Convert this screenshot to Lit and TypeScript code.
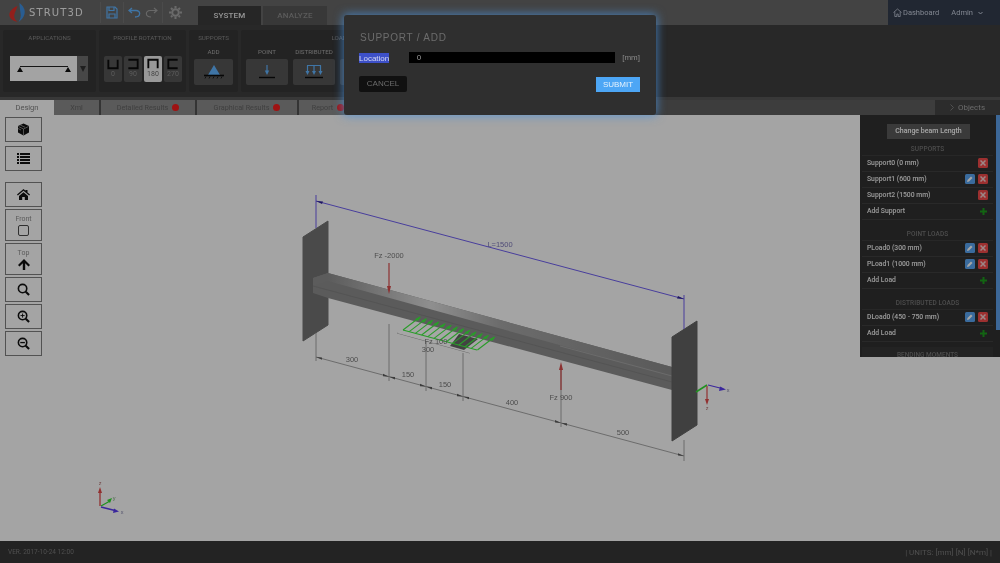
import { LitElement, html, css, svg } from 'lit';
import { customElement } from 'lit/decorators.js';

const objectSections = [
  { title: 'SUPPORTS', add: 'Add Support', rows: [
    { name: 'Support0 (0 mm)', edit: false },
    { name: 'Support1 (600 mm)', edit: true },
    { name: 'Support2 (1500 mm)', edit: false },
  ] },
  { title: 'POINT LOADS', add: 'Add Load', rows: [
    { name: 'PLoad0 (300 mm)', edit: true },
    { name: 'PLoad1 (1000 mm)', edit: true },
  ] },
  { title: 'DISTRIBUTED LOADS', add: 'Add Load', rows: [
    { name: 'DLoad0 (450 - 750 mm)', edit: true },
  ] },
];

const profiles = [
  { label: '0', d: 'M3 2v11h12V2' },
  { label: '90', d: 'M3 2h12v11H3' },
  { label: '180', d: 'M3 13V2h12v11', active: true },
  { label: '270', d: 'M15 2H3v11h12' },
];

const tabs = [
  { label: 'Design', cls: 'design' },
  { label: 'Xml', cls: 'xml' },
  { label: 'Detailed Results', cls: 'detailed', dot: true },
  { label: 'Graphical Results', cls: 'graphical', dot: true },
  { label: 'Report', cls: 'report', dot: true },
];

const dimLabels = [
  ['300', 352, 362], ['150', 408, 377], ['150', 445, 387], ['400', 512, 405], ['500', 623, 435],
  ['300', 428, 352], ['Fz 100', 436, 344], ['Fz -2000', 389, 258], ['Fz 900', 561, 400],
] as const;

const dimVerticals = [
  [316, 333, 361], [389, 324, 381], [426, 338, 391], [463, 353, 401], [561, 365, 427], [684, 440, 461],
];

// arrowheads on the lower dimension line, dir points away from the vertical
const dimTicks = [
  [316, 1], [389, -1], [389, 1], [426, -1], [426, 1], [463, -1], [463, 1], [561, -1], [561, 1], [684, -1],
];

const dimY = (x: number) => 357 + (x - 316) * 0.269;

const loadArrows = Array.from({ length: 13 }, (_, i) => 403 + i * 6.2);

@customElement('app-root')
export class AppRoot extends LitElement {
  static styles = css`
    :host {
      display: grid;
      grid-template-rows: 25px 72px 3px 15px 1fr 22px;
      height: 563px;
      width: 1000px;
      position: relative;
      overflow: hidden;
      font-family: Roboto, "Liberation Sans", sans-serif;
      background: #fcfcfc;
      filter: blur(.35px);
    }
    .topbar {
      display: flex;
      align-items: stretch;
      background: #686868;
    }
    .logo {
      display: flex;
      align-items: center;
      gap: 3px;
      padding-left: 8px;
      width: 92px;
      color: #f0f0f0;
      font-family: "DejaVu Sans", sans-serif;
      font-size: 10px;
      letter-spacing: 1.15px;
      white-space: nowrap;
    }
    .tool {
      display: flex;
      align-items: center;
      justify-content: center;
      border-left: 1px solid #747474;
      height: 21px;
      align-self: center;
      gap: 4px;
    }
    .tool.save { width: 22px; }
    .tool.undo { width: 38px; }
    .tool.gear { width: 24px; margin-right: 11px; }
    .sys-tabs { display: flex; gap: 2px; align-self: flex-end; }
    .sys-tab {
      height: 19px;
      line-height: 19px;
      text-align: center;
      font-size: 8px;
      font-weight: 500;
      letter-spacing: .2px;
      width: 63px;
      background: #3b3b3b;
      color: #e4e4e4;
    }
    .sys-tab.off { background: #565656; color: #8c8c8c; width: 64px; }
    .user {
      margin-left: auto;
      width: 112px;
      background: #343d4e;
      display: flex;
      align-items: center;
      gap: 12px;
      padding-left: 5px;
      box-sizing: border-box;
      color: #c4ccdb;
      font-size: 7.5px;
    }
    .user span { display: flex; align-items: center; gap: 1px; }
    .user .caret { margin-left: 4px; }
    .ribbon {
      background: #3e3e3e;
      display: flex;
      gap: 3px;
      padding: 5px 0 5px 3px;
      box-sizing: border-box;
    }
    .group {
      background: #363636;
      border-radius: 2px;
      color: #8a8a8a;
      font-size: 6.2px;
      text-align: center;
      box-sizing: border-box;
      padding-top: 4px;
      display: flex;
      flex-direction: column;
    }
    .group.apps { width: 93px; }
    .group.rot { width: 87px; }
    .group.sup { width: 49px; }
    .group.loads { width: 200px; }
    .group .title { height: 14px; line-height: 8px; }
    .app-select { display: flex; margin: 8px 0 0 7px; height: 25px; }
    .app-face {
      width: 67px;
      background: #fbfbfb;
      display: flex;
      align-items: center;
      justify-content: center;
    }
    .app-arrow {
      width: 11px;
      background: #6e6e6e;
      display: flex;
      align-items: center;
      justify-content: center;
    }
    .app-arrow i {
      border: 3.5px solid transparent;
      border-top: 6px solid #303030;
      border-bottom: 0;
    }
    .profiles { display: flex; gap: 2px; margin: 8px 0 0 5px; }
    .profile {
      width: 18px;
      height: 26px;
      background: #555555;
      border-radius: 2px;
      color: #8c8c8c;
      font-size: 7px;
      display: flex;
      flex-direction: column;
      align-items: center;
      padding-top: 2px;
      box-sizing: border-box;
    }
    .profile.on { background: #ececec; color: #6a6a6a; }
    .profile svg { display: block; }
    .act-row { display: flex; gap: 5px; padding-left: 5px; }
    .act { width: 42px; text-align: center; }
    .sup .act { width: 39px; }
    .act-label { height: 11px; line-height: 8px; color: #a8a8a8; white-space: nowrap; }
    .act-btn {
      height: 26px;
      background: #555555;
      border-radius: 2px;
      display: flex;
      align-items: center;
      justify-content: center;
    }
    .band { background: #575757; }
    .tabs {
      display: flex;
      background: #5e5e5e;
      font-size: 7.2px;
      color: #626262;
    }
    .tab {
      box-sizing: border-box;
      border-right: 2px solid #505050;
      background: #8a8a8a;
      display: flex;
      align-items: center;
      justify-content: center;
      gap: 4px;
      white-space: nowrap;
    }
    .tab.design { width: 54px; background: #fcfcfc; border-right: 0; color: #808080; font-size: 7.5px; }
    .tab.xml { width: 47px; }
    .tab.detailed { width: 96px; }
    .tab.graphical { width: 102px; }
    .tab.report { width: 60px; }
    .tab i {
      width: 7px;
      height: 7px;
      border-radius: 50%;
      background: #f41c1c;
    }
    .objects-tab {
      margin-left: auto;
      width: 65px;
      background: #444444;
      color: #a4a4a4;
      font-size: 8px;
      display: flex;
      align-items: center;
      justify-content: center;
      gap: 4px;
    }
    .stage { position: relative; overflow: hidden; }
    .scene { position: absolute; inset: 0; width: 1000px; height: 426px; }
    .scene text { font-family: "Liberation Sans", sans-serif; font-size: 7.5px; fill: #787878; text-anchor: middle; }
    .tools {
      position: absolute;
      left: 5px;
      top: 2px;
      display: flex;
      flex-direction: column;
      gap: 2px;
    }
    .tbtn {
      width: 37px;
      height: 25px;
      box-sizing: border-box;
      border: 1px solid #7f7f7f;
      display: flex;
      flex-direction: column;
      align-items: center;
      justify-content: center;
      font-size: 7px;
      color: #8c8c8c;
      gap: 2px;
    }
    .tbtn.tall { height: 32px; }
    .tbtn.g1 { margin-top: 2px; }
    .tbtn.g2 { margin-top: 9px; }
    .panel {
      position: absolute;
      left: 860px;
      top: 0;
      width: 140px;
      height: 242px;
      overflow: hidden;
      display: flex;
      background: #303030;
    }
    .panel-body { width: 136px; box-sizing: border-box; padding: 9px 3px 0 2px; }
    .scroll { width: 4px; height: 215px; background: #5c9fe8; }
    .change {
      display: block;
      margin: 0 auto;
      width: 83px;
      height: 15px;
      line-height: 15px;
      text-align: center;
      background: #5a5a5a;
      color: #ffffff;
      font-size: 7px;
      font-weight: 500;
      position: relative;
      left: 1px;
    }
    .sec-title {
      height: 17px;
      line-height: 20px;
      text-align: center;
      color: #767676;
      font-size: 6.5px;
      font-weight: 500;
      letter-spacing: .1px;
      border-bottom: 1px solid #3c3c3c;
      box-sizing: border-box;
    }
    .sec + .sec { margin-top: 4px; }
    .row {
      height: 16px;
      box-sizing: border-box;
      border-bottom: 1px solid #3f3f3f;
      display: flex;
      align-items: center;
      padding: 0 5px 1px;
      color: #ececec;
      font-size: 6.8px;
      font-weight: 500;
      gap: 3px;
    }
    .row .name { flex: 1; white-space: nowrap; }
    .ic {
      width: 10px;
      height: 10px;
      border-radius: 1.5px;
      display: flex;
      align-items: center;
      justify-content: center;
    }
    .ic.edit { background: #5aa5f2; }
    .ic.del { background: #f04a4a; }
    .plus { width: 10px; display: flex; justify-content: center; }
    .bending {
      margin-top: 5px;
      height: 20px;
      line-height: 17px;
      background: #363636;
      text-align: center;
      color: #767676;
      font-size: 6.5px;
      font-weight: 500;
    }
    .footer {
      background: #363636;
      color: #7a7a7a;
      display: flex;
      align-items: center;
      justify-content: space-between;
      padding: 0 8px;
      font-size: 6.5px;
    }
    .footer .units { font-size: 8px; }
    .dim {
      position: absolute;
      inset: 0;
      background: rgba(0, 0, 0, .35);
    }
    .modal {
      position: absolute;
      left: 344px;
      top: 15px;
      width: 312px;
      height: 100px;
      box-sizing: border-box;
      padding: 17px 16px 0 16px;
      background: #2f2f2f;
      border-radius: 3px;
      box-shadow: 0 0 10px 1px rgba(74, 144, 217, .75);
      font-family: "Liberation Sans", sans-serif;
      color: #9a9a9a;
    }
    .modal h3 {
      margin: 0;
      font-size: 10px;
      line-height: 12px;
      font-weight: 400;
      letter-spacing: .75px;
      color: #6c6c6c;
    }
    .field { display: flex; align-items: center; margin-top: 8px; font-size: 8px; margin-left: -1px; }
    .field label { width: 50px; }
    .field label span { background: #3d50c8; color: #d4d8f4; padding: 0.5px 0; }
    .field .input {
      width: 207px;
      height: 11px;
      line-height: 11px;
      background: #000;
      color: #9a9a9a;
      padding-left: 8px;
      box-sizing: border-box;
    }
    .field .unit { margin-left: 7px; color: #8a8a8a; }
    .actions { display: flex; justify-content: space-between; align-items: center; margin-top: 13px; margin-left: -1px; }
    .btn { font-size: 8px; text-align: center; }
    .btn.cancel { width: 48px; height: 16px; line-height: 16px; background: #111; border-radius: 2px; color: #6c6c6c; }
    .btn.submit { width: 44px; height: 15px; line-height: 15px; background: #4da6f5; color: #e6f2fd; }
  `;

  private scene() {
    return svg`
      <defs>
        <linearGradient id="beamTop" x1="328" y1="0" x2="672" y2="0" gradientUnits="userSpaceOnUse">
          <stop offset="0" stop-color="#8e8e8e" />
          <stop offset=".3" stop-color="#dcdcdc" />
          <stop offset=".5" stop-color="#a6a6a6" />
          <stop offset="1" stop-color="#8a8a8a" />
        </linearGradient>
      </defs>
      <polygon points="303,237 328,221 328,325 303,341" fill="#727272" stroke="#727272" stroke-linejoin="round" />
      <polygon points="313,278 328,273 672,367 672,390 328,298 313,293" fill="#8c8c8c" />
      <polygon points="313,278 328,273 672,367 672,376 328,281 313,286" fill="url(#beamTop)" />
      <line x1="313" y1="286" x2="672" y2="382" stroke="#7e7e7e" stroke-width=".8" />
      <line x1="560" y1="346" x2="672" y2="376" stroke="#b0b0b0" stroke-width=".7" />
      <polygon points="672,337 697,321 697,425 672,441" fill="#636363" stroke="#636363" stroke-linejoin="round" />

      <g stroke="#9c9c9c" stroke-width=".9">
        <line x1="316" y1="357" x2="684" y2="456" />
        <line x1="397" y1="333" x2="470" y2="353" />
        ${dimVerticals.map(([x, a, b]) => svg`<line x1=${x} y1=${a} x2=${x} y2=${b} />`)}
      </g>
      ${dimTicks.map(([x, d]) => svg`<polygon
        points="${x},${dimY(x)} ${x + d * 6},${dimY(x + d * 6) - 1.2} ${x + d * 6},${dimY(x + d * 6) + 1.2}"
        fill="#5c5c5c" />`)}
      <polygon points="397,333 412,321 485,341 470,353" fill="#ffffff" />
      <polygon points="459,334 478,339 464,350 450,346" fill="#666666" />
      <g stroke="#40f040" stroke-width="1.1" fill="none">
        <line x1="403" y1="330" x2="477" y2="350" />
        ${loadArrows.map((x, i) => svg`<line x1=${x} y1=${330 + i * 1.67} x2=${x + 17} y2=${317 + i * 1.67} />`)}
      </g>
      ${loadArrows.map((x, i) => svg`<polygon
        points="${x + 18},${316.5 + i * 1.67} ${x + 12},${319 + i * 1.67} ${x + 15},${321 + i * 1.67}"
        fill="#40f040" />`)}
      <g stroke="#6f5ff0" stroke-width="1">
        <line x1="316" y1="201" x2="684" y2="299" />
        <line x1="316" y1="195" x2="316" y2="228" />
        <line x1="684" y1="295" x2="684" y2="329" />
      </g>
      <polygon points="316,201 323,201.5 322,204" fill="#30249a" />
      <polygon points="684,299 677,298.500 678,296" fill="#30249a" />
      <text x="500" y="247" style="fill:#7c76b8">L=1500</text>
      ${dimLabels.map(([t, x, y]) => svg`<text x=${x} y=${y}>${t}</text>`)}

      <g stroke="#d84a4a" stroke-width="1.2" fill="#d84a4a">
        <line x1="389" y1="263" x2="389" y2="288" />
        <polygon points="389,294 387,286 391,286" stroke="none" />
        <line x1="561" y1="368" x2="561" y2="390" />
        <polygon points="561,362 559,370 563,370" stroke="none" />
      </g>

      <g stroke-width="1.2">
        <line x1="708" y1="385" x2="722" y2="388.500" stroke="#5a3cf0" />
        <polygon points="726,389.500 719,391 720,386.500" fill="#5a3cf0" />
        <line x1="696" y1="392" x2="707" y2="385" stroke="#30e030" stroke-width="1.500" />
        <line x1="707" y1="386" x2="707" y2="402" stroke="#e04a4a" />
        <polygon points="707,405 705,399 709,399" fill="#e04a4a" />
      </g>
      <text x="728" y="392" style="font-size:5.5px;fill:#8080a8">x</text>
      <text x="707" y="410" style="font-size:5.5px;fill:#b07070">z</text>

      <g stroke-width="1.300">
        <line x1="100" y1="506" x2="100" y2="491" stroke="#e04a4a" />
        <polygon points="100,487 98,493 102,493" fill="#e04a4a" />
        <line x1="101" y1="506" x2="110" y2="501" stroke="#30e030" />
        <polygon points="112,498 110,503 107,500" fill="#30e030" />
        <line x1="101" y1="507" x2="115" y2="510.500" stroke="#5a3cf0" />
        <polygon points="119,511.500 113,513 114,508.500" fill="#5a3cf0" />
      </g>
      <text x="100" y="485" style="font-size:5.5px;fill:#b07070">z</text>
      <text x="114" y="500" style="font-size:5.5px;fill:#70a070">y</text>
      <text x="122" y="514" style="font-size:5.5px;fill:#8080a8">x</text>
    `;
  }

  private searchIcon(inner: unknown = '') {
    return html`<svg width="13" height="13" viewBox="0 0 14 14" fill="none" stroke="#111" stroke-width="1.7">
      <circle cx="6" cy="6" r="4.5" /><path d="M9.4 9.4L13 13" stroke-width="2.2" />${inner}
    </svg>`;
  }

  render() {
    return html`
      <div class="topbar">
        <div class="logo">
          <svg width="18" height="20" viewBox="0 0 17 20">
            <path d="M9 3C4 5 0 9 1 13c.6 3 4 5 8 6-3-3-4-5-3-8 .6-2 2-5 3-8z" fill="#e0302a" />
            <path d="M11 0c4 3 6 7 5 11-.7 3-3 6-6 8 2-3 2.600-6 2-9-.4-3-1-7-1-10z" fill="#3f8fe0" />
          </svg>
          <span>STRUT3D</span>
        </div>
        <div class="tool save">
          <svg width="12" height="13" viewBox="0 0 12 13" fill="none" stroke="#62b4ff" stroke-width="1.2">
            <path d="M1 1h8l2 2v9H1z" /><path d="M3 1v3.500h5V1M3 12V8h6v4" />
          </svg>
        </div>
        <div class="tool undo">
          <svg width="13" height="11" viewBox="0 0 13 11" fill="none" stroke="#62b4ff" stroke-width="1.3">
            <path d="M4 1L1 3.500 4 6M1 3.500h7c5 0 5 6.500-1 6.500" />
          </svg>
          <svg width="13" height="11" viewBox="0 0 13 11" fill="none" stroke="#a0a0a0" stroke-width="1.1">
            <path d="M9 1l3 2.500L9 6M12 3.500H5c-5 0-5 6.500 1 6.500" />
          </svg>
        </div>
        <div class="tool gear">
          <svg width="13" height="13" viewBox="0 0 13 13">
            <circle cx="6.500" cy="6.500" r="3.300" fill="none" stroke="#a4a4a4" stroke-width="2" />
            <path d="M6.500 0v13M0 6.500h13M2 2l9 9M11 2l-9 9" stroke="#a4a4a4" stroke-width="2" stroke-dasharray="2.200 8.600 2.200" />
          </svg>
        </div>
        <div class="sys-tabs">
          <div class="sys-tab">SYSTEM</div>
          <div class="sys-tab off">ANALYZE</div>
        </div>
        <div class="user">
          <span>
            <svg width="9" height="9" viewBox="0 0 9 9" fill="none" stroke="#c4ccdb" stroke-width=".8">
              <path d="M.5 4.500L4.500 1l4 3.500M1.800 3.800V8.500h2V6h1.400v2.500h2V3.800" />
            </svg>Dashboard
          </span>
          <span>Admin
            <svg class="caret" width="5" height="4" viewBox="0 0 5 4" fill="none" stroke="#c4ccdb"><path d="M.5 1l2 2 2-2" /></svg>
          </span>
        </div>
      </div>

      <div class="ribbon">
        <div class="group apps">
          <div class="title">APPLICATIONS</div>
          <div class="app-select">
            <div class="app-face">
              <svg width="56" height="10" viewBox="0 0 56 10">
                <path d="M4 2.500h48" stroke="#222" stroke-width="1" />
                <path d="M4 3L1 8h6zM52 3l-3 5h6z" fill="#111" />
              </svg>
            </div>
            <div class="app-arrow"><i></i></div>
          </div>
        </div>
        <div class="group rot">
          <div class="title">PROFILE ROTATTION</div>
          <div class="profiles">
            ${profiles.map(p => html`
              <div class="profile ${p.active ? 'on' : ''}">
                <svg width="14" height="12" viewBox="0 0 18 15" fill="none" stroke="#0c0c0c" stroke-width="2.400"><path d=${p.d} /></svg>
                ${p.label}
              </div>
            `)}
          </div>
        </div>
        <div class="group sup">
          <div class="title">SUPPORTS</div>
          <div class="act-row">
            <div class="act">
              <div class="act-label">ADD</div>
              <div class="act-btn">
                <svg width="22" height="16" viewBox="0 0 22 16">
                  <path d="M11 1l6 10H5z" fill="#62b4ff" />
                  <path d="M1 11.500h20" stroke="#0c0c0c" stroke-width="1.600" />
                  <path d="M3 12.500l-1 2M7 12.500l-1 2M11 12.500l-1 2M15 12.500l-1 2M19 12.500l-1 2" stroke="#0c0c0c" stroke-width=".8" />
                </svg>
              </div>
            </div>
          </div>
        </div>
        <div class="group loads">
          <div class="title">LOADS</div>
          <div class="act-row">
            <div class="act">
              <div class="act-label">POINT</div>
              <div class="act-btn">
                <svg width="22" height="16" viewBox="0 0 22 16">
                  <path d="M11 1v7" stroke="#62b4ff" stroke-width="1.200" />
                  <path d="M11 11L8.800 6.500h4.400z" fill="#62b4ff" />
                  <path d="M3 13.500h16" stroke="#0c0c0c" stroke-width="1.400" />
                </svg>
              </div>
            </div>
            <div class="act">
              <div class="act-label">DISTRIBUTED</div>
              <div class="act-btn">
                <svg width="22" height="16" viewBox="0 0 22 16" fill="none">
                  <path d="M4 1.500h14M4.500 1.500V8M11 1.500V8M17.500 1.500V8" stroke="#62b4ff" stroke-width="1.200" />
                  <path d="M4.500 11L2.500 7h4zM11 11L9 7h4zM17.500 11l-2-4h4z" fill="#62b4ff" />
                  <path d="M2 13.500h18" stroke="#0c0c0c" stroke-width="1.400" />
                </svg>
              </div>
            </div>
            <div class="act"><div class="act-label"></div><div class="act-btn"></div></div>
          </div>
        </div>
      </div>

      <div class="band"></div>

      <div class="tabs">
        ${tabs.map(t => html`<div class="tab ${t.cls}">${t.label}${t.dot ? html`<i></i>` : ''}</div>`)}
        <div class="objects-tab">
          <svg width="4" height="7" viewBox="0 0 4 7" fill="none" stroke="#7c7c7c"><path d="M.5.500l3 3-3 3" /></svg>
          Objects
        </div>
      </div>

      <div class="stage">
        <svg class="scene" viewBox="0 115 1000 426">${this.scene()}</svg>

        <div class="tools">
          <div class="tbtn">
            <svg width="13" height="13" viewBox="0 0 13 13">
              <path d="M6.500.500l5.500 2.500v6.500L6.500 12.500 1 9.500V3z" fill="#111" />
              <path d="M1.500 3.500l5 2.500v6M6.500 6l5-2.500M3 1.800l5 2.500M4 7l-3-1.500" stroke="#aaa" stroke-width=".7" fill="none" />
            </svg>
          </div>
          <div class="tbtn g1">
            <svg width="13" height="11" viewBox="0 0 13 11" fill="#111">
              <path d="M0 0h2v2H0zM3 0h10v2H3zM0 3h2v2H0zM3 3h10v2H3zM0 6h2v2H0zM3 6h10v2H3zM0 9h2v2H0zM3 9h10v2H3z" />
            </svg>
          </div>
          <div class="tbtn g2">
            <svg width="13" height="11" viewBox="0 0 13 11" fill="#111">
              <path d="M6.500 0L0 5.500l.8 1L6.500 1.800l5.700 4.700.8-1L10.500 3.400V1h-2v.8zM2 7l4.500-3.800L11 7v4H7.800V8H5.200v3H2z" />
            </svg>
          </div>
          <div class="tbtn tall">Front
            <svg width="11" height="11" viewBox="0 0 11 11" fill="none" stroke="#4a4a4a" stroke-width="1"><rect x=".5" y=".5" width="10" height="10" rx="1.500" /></svg>
          </div>
          <div class="tbtn tall">Top
            <svg width="12" height="11" viewBox="0 0 12 11" fill="#111"><path d="M6 0l6 6-1.500 1.500L7.200 4.300V11H4.800V4.300L1.500 7.500 0 6z" /></svg>
          </div>
          <div class="tbtn">${this.searchIcon()}</div>
          <div class="tbtn">${this.searchIcon(svg`<path d="M3.800 6h4.400M6 3.800v4.400" stroke-width="1" />`)}</div>
          <div class="tbtn">${this.searchIcon(svg`<path d="M3.500 6h5" stroke-width="1.400" />`)}</div>
        </div>

        <div class="panel">
          <div class="panel-body">
            <div class="change">Change beam Length</div>
            ${objectSections.map(s => html`
              <div class="sec">
                <div class="sec-title">${s.title}</div>
                ${s.rows.map(r => html`
                  <div class="row">
                    <span class="name">${r.name}</span>
                    ${r.edit ? html`<span class="ic edit">
                      <svg width="6" height="6" viewBox="0 0 6 6"><path d="M0 6l.5-2L4 .5 5.500 2 2 5.500z" fill="#fff" /></svg>
                    </span>` : ''}
                    <span class="ic del">
                      <svg width="6" height="6" viewBox="0 0 6 6" stroke="#f0d0d0" stroke-width="1.500"><path d="M.5.500l5 5M5.500.500l-5 5" /></svg>
                    </span>
                  </div>
                `)}
                <div class="row">
                  <span class="name">${s.add}</span>
                  <span class="plus">
                    <svg width="7" height="7" viewBox="0 0 7 7" stroke="#1c9a1c" stroke-width="2"><path d="M3.500 0v7M0 3.500h7" /></svg>
                  </span>
                </div>
              </div>
            `)}
            <div class="bending">BENDING MOMENTS</div>
          </div>
          <div class="scroll"></div>
        </div>
      </div>

      <div class="footer">
        <span>VER. 2017-10-24 12:00</span>
        <span class="units">| UNITS: [mm] [N] [N*m] |</span>
      </div>

      <div class="dim"></div>

      <div class="modal">
        <h3>SUPPORT / ADD</h3>
        <div class="field">
          <label><span>Location</span></label>
          <div class="input">0</div>
          <span class="unit">[mm]</span>
        </div>
        <div class="actions">
          <div class="btn cancel">CANCEL</div>
          <div class="btn submit">SUBMIT</div>
        </div>
      </div>
    `;
  }
}
